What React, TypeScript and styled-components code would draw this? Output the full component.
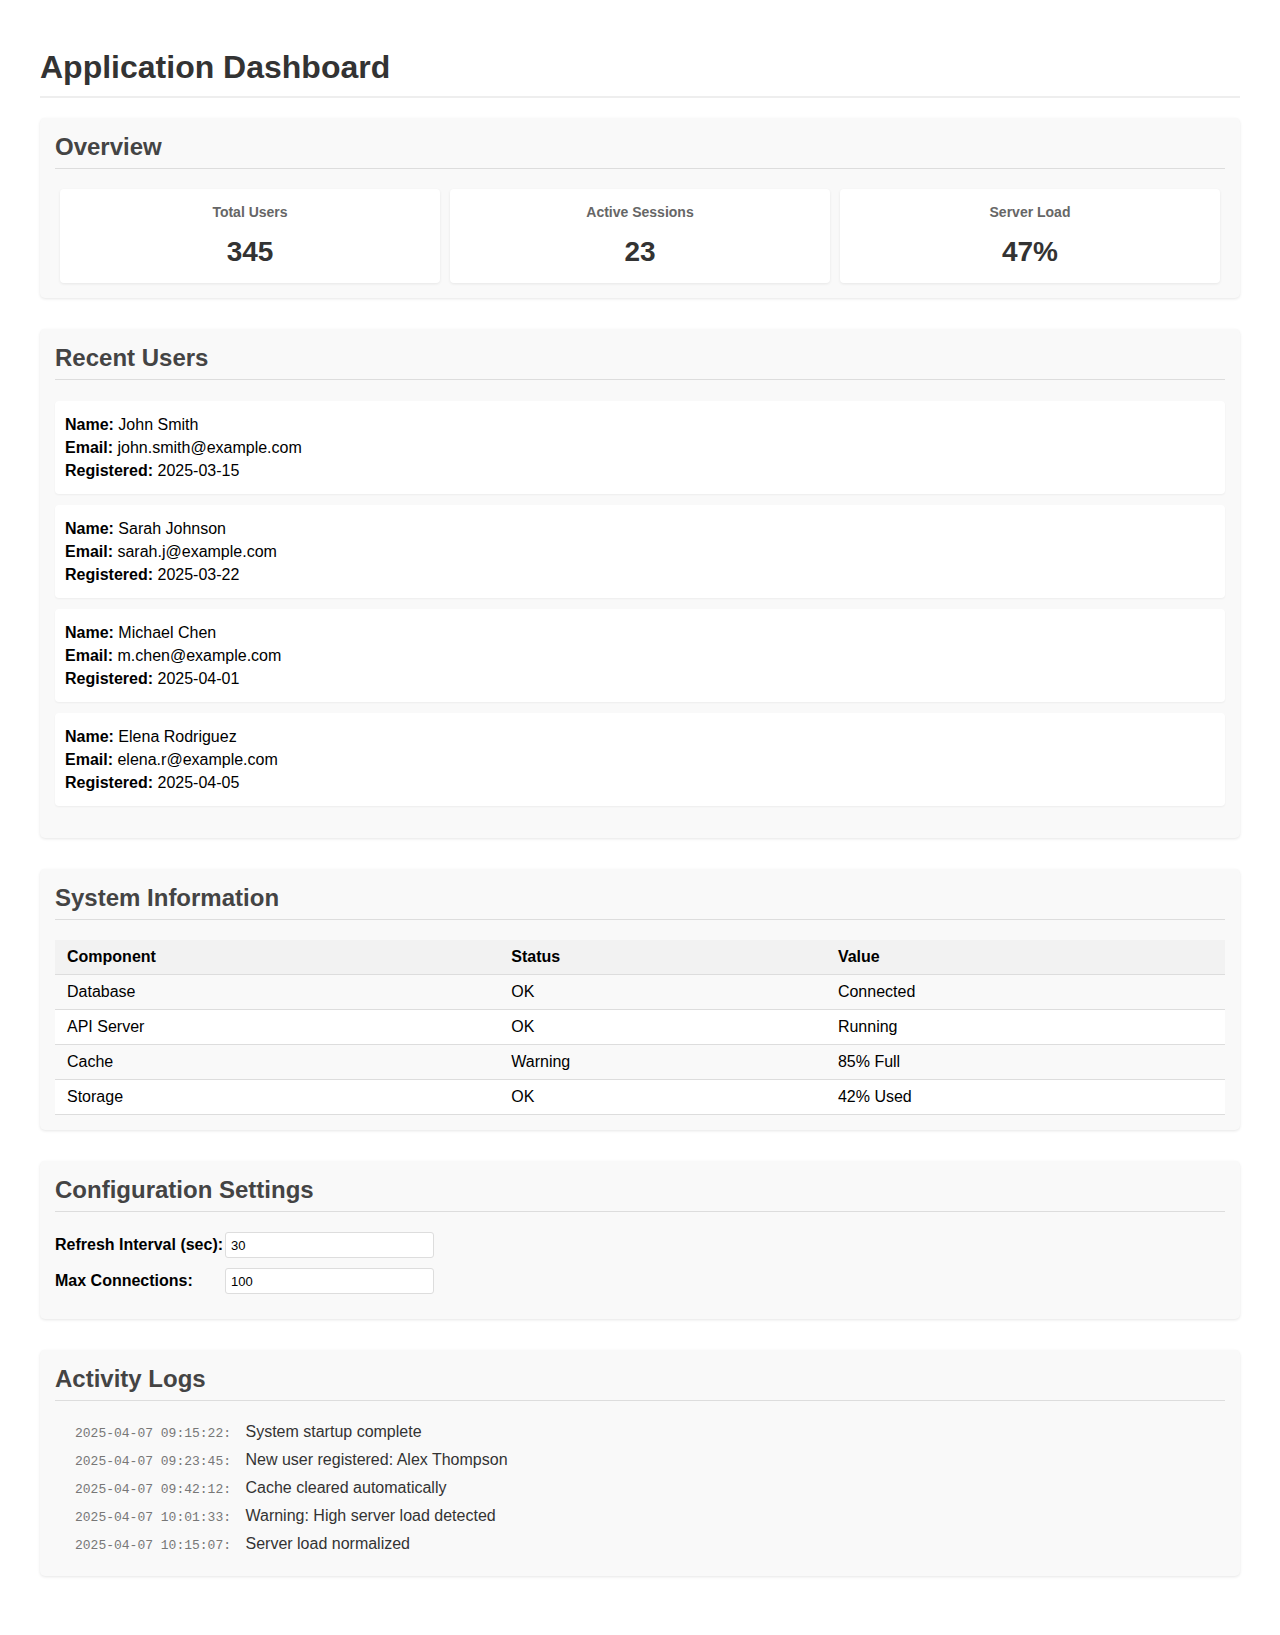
import React from "react";
import styled, {createGlobalStyle} from "styled-components";

const GlobalStyle = createGlobalStyle`
  body {
    margin: 8px;
    padding: 20px;
    font-family: "Liberation Sans", Arial, sans-serif;
    color: #000;
    background: #fff;
  }
`;

const Container = styled.div`
  max-width: 1200px;
  margin: 0 auto;
`;

const PageTitle = styled.h1`
  font-size: 32px;
  color: #333;
  margin: 21px 0 20px;
  padding-bottom: 10px;
  border-bottom: 2px solid #eee;
`;

const Section = styled.section`
  background-color: #f9f9f9;
  border-radius: 5px;
  padding: 15px;
  margin-bottom: 31px;
  box-shadow: 0 1px 3px rgba(0, 0, 0, 0.1);
`;

const SectionTitle = styled.h2`
  font-size: 24px;
  color: #444;
  margin: 0 0 20px;
  padding-bottom: 7px;
  border-bottom: 1px solid #ddd;
`;

const StatRow = styled.div`
  display: flex;
  gap: 10px;
  padding: 0 5px;
`;

const StatCard = styled.div`
  flex: 1;
  background: #fff;
  border-radius: 4px;
  padding: 15px;
  text-align: center;
  box-shadow: 0 1px 3px rgba(0, 0, 0, 0.08);
`;

const StatLabel = styled.div`
  font-size: 14px;
  font-weight: bold;
  color: #666;
  margin-bottom: 15px;
`;

const StatValue = styled.div`
  font-size: 28px;
  font-weight: bold;
  color: #333;
  line-height: 33px;
`;

const UserList = styled.div`
  display: flex;
  flex-direction: column;
  gap: 11px;
  padding-top: 1px;
  margin-bottom: 17px;
`;

const UserCard = styled.div`
  background: #fff;
  border-radius: 4px;
  padding: 12px 10px;
  line-height: 23px;
  font-size: 16px;
  box-shadow: 0 1px 2px rgba(0, 0, 0, 0.05);
`;

const Table = styled.table`
  width: 100%;
  border-collapse: collapse;
  font-size: 16px;

  th, td {
    padding: 8px 12px;
    text-align: left;
    border-bottom: 1px solid #ddd;
  }

  th {
    background-color: #f2f2f2;
    font-weight: bold;
  }

  tbody tr:nth-child(even) {
    background-color: #fff;
  }
`;

const FormRow = styled.div`
  display: flex;
  align-items: center;
  margin-bottom: 10px;
`;

const FormLabel = styled.label`
  width: 170px;
  font-weight: bold;
  font-size: 16px;
`;

const FormInput = styled.input`
  box-sizing: border-box;
  width: 209px;
  height: 26px;
  padding: 4px 5px;
  font-family: "Liberation Sans", Arial, sans-serif;
  font-size: 13px;
  border: 1px solid #ddd;
  border-radius: 3px;
  background: #fff;
  color: #000;
`;

const LogList = styled.ul`
  list-style: none;
  margin: -3px 0 3px;
  padding: 0 0 0 20px;
`;

const LogItem = styled.li`
  padding: 5px 0;
  font-size: 16px;
  color: #333;
`;

const Timestamp = styled.span`
  font-family: "Liberation Mono", "Courier New", monospace;
  font-size: 13px;
  color: #777;
  margin-right: 10px;
`;

const stats = [
  {label: "Total Users", value: "345"},
  {label: "Active Sessions", value: "23"},
  {label: "Server Load", value: "47%"},
];

const users = [
  {name: "John Smith", email: "john.smith@example.com", registered: "2025-03-15"},
  {name: "Sarah Johnson", email: "sarah.j@example.com", registered: "2025-03-22"},
  {name: "Michael Chen", email: "m.chen@example.com", registered: "2025-04-01"},
  {name: "Elena Rodriguez", email: "elena.r@example.com", registered: "2025-04-05"},
];

const systemRows = [
  {component: "Database", status: "OK", value: "Connected"},
  {component: "API Server", status: "OK", value: "Running"},
  {component: "Cache", status: "Warning", value: "85% Full"},
  {component: "Storage", status: "OK", value: "42% Used"},
];

const logs = [
  {time: "2025-04-07 09:15:22:", message: "System startup complete"},
  {time: "2025-04-07 09:23:45:", message: "New user registered: Alex Thompson"},
  {time: "2025-04-07 09:42:12:", message: "Cache cleared automatically"},
  {time: "2025-04-07 10:01:33:", message: "Warning: High server load detected"},
  {time: "2025-04-07 10:15:07:", message: "Server load normalized"},
];

export default function App() {
  const [refresh, setRefresh] = React.useState("30");
  const [maxConn, setMaxConn] = React.useState("100");

  return (
    <Container>
      <GlobalStyle />
      <PageTitle>Application Dashboard</PageTitle>

      <Section>
        <SectionTitle>Overview</SectionTitle>
        <StatRow>
          {stats.map(s => (
            <StatCard key={s.label}>
              <StatLabel>{s.label}</StatLabel>
              <StatValue>{s.value}</StatValue>
            </StatCard>
          ))}
        </StatRow>
      </Section>

      <Section>
        <SectionTitle>Recent Users</SectionTitle>
        <UserList>
          {users.map(u => (
            <UserCard key={u.email}>
              <div><strong>Name:</strong> {u.name}</div>
              <div><strong>Email:</strong> {u.email}</div>
              <div><strong>Registered:</strong> {u.registered}</div>
            </UserCard>
          ))}
        </UserList>
      </Section>

      <Section>
        <SectionTitle>System Information</SectionTitle>
        <Table>
          <thead>
            <tr>
              <th>Component</th>
              <th>Status</th>
              <th>Value</th>
            </tr>
          </thead>
          <tbody>
            {systemRows.map(r => (
              <tr key={r.component}>
                <td>{r.component}</td>
                <td>{r.status}</td>
                <td>{r.value}</td>
              </tr>
            ))}
          </tbody>
        </Table>
      </Section>

      <Section>
        <SectionTitle>Configuration Settings</SectionTitle>
        <div>
          <FormRow>
            <FormLabel htmlFor="refresh">Refresh Interval (sec):</FormLabel>
            <FormInput id="refresh" type="number" value={refresh}
                       onChange={e => setRefresh(e.target.value)} />
          </FormRow>
          <FormRow>
            <FormLabel htmlFor="maxconn">Max Connections:</FormLabel>
            <FormInput id="maxconn" type="number" value={maxConn}
                       onChange={e => setMaxConn(e.target.value)} />
          </FormRow>
        </div>
      </Section>

      <Section>
        <SectionTitle>Activity Logs</SectionTitle>
        <LogList>
          {logs.map(l => (
            <LogItem key={l.time}>
              <Timestamp>{l.time}</Timestamp> {l.message}
            </LogItem>
          ))}
        </LogList>
      </Section>
    </Container>
  );
}
